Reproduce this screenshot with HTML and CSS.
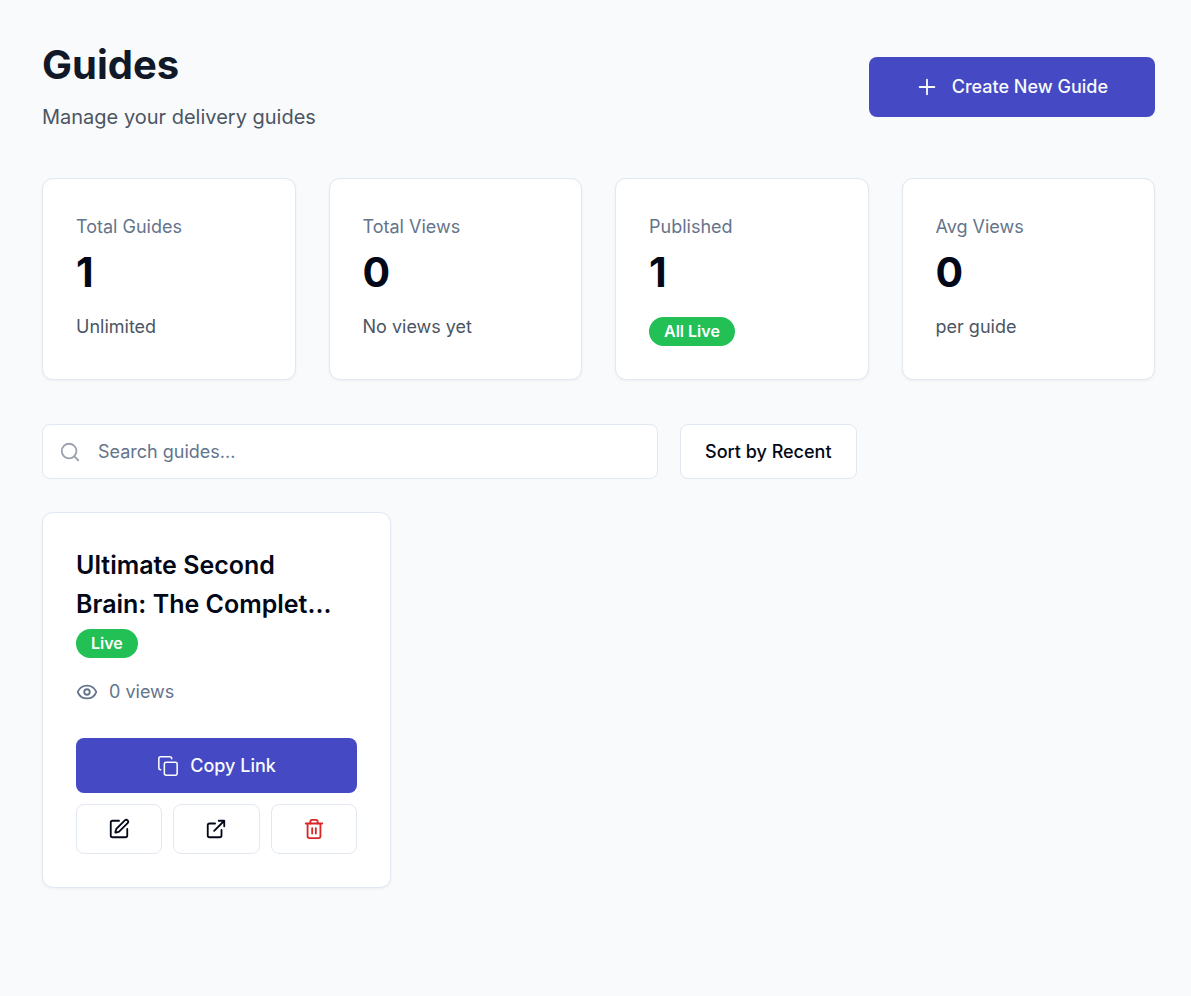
FILE: index.html
```html
<!DOCTYPE html>
<html lang="en">

<head>
    <meta charset="UTF-8">
    <meta name="viewport" content="width=device-width, initial-scale=1.0">
    <title>Guides</title>
    <link rel="stylesheet" href="styles.css">
</head>

<body>
    <main class="page">
        <!-- Page Header -->
        <header class="page-header">
            <div>
                <h1>Guides</h1>
                <p class="subtitle">Manage your delivery guides</p>
            </div>
            <button type="button" class="btn btn-primary btn-create">
                <svg class="icon" viewBox="0 0 24 24" aria-hidden="true">
                    <path d="M4 12h16M12 4v16"/>
                </svg>
                Create New Guide
            </button>
        </header>

        <!-- Stats -->
        <section class="stats">
            <div class="card">
                <h2 class="stat-label">Total Guides</h2>
                <p class="stat-value">1</p>
                <p class="stat-note">Unlimited</p>
            </div>
            <div class="card">
                <h2 class="stat-label">Total Views</h2>
                <p class="stat-value">0</p>
                <p class="stat-note">No views yet</p>
            </div>
            <div class="card">
                <h2 class="stat-label">Published</h2>
                <p class="stat-value">1</p>
                <span class="badge stat-badge">All Live</span>
            </div>
            <div class="card">
                <h2 class="stat-label">Avg Views</h2>
                <p class="stat-value">0</p>
                <p class="stat-note">per guide</p>
            </div>
        </section>

        <!-- Search and Sort -->
        <div class="toolbar">
            <label class="search">
                <svg class="icon search-icon" viewBox="0 0 24 24" aria-hidden="true">
                    <circle cx="11" cy="11" r="8"/>
                    <path d="m21 21-4.3-4.3"/>
                </svg>
                <input type="search" placeholder="Search guides..." aria-label="Search guides">
            </label>
            <button type="button" class="btn btn-outline btn-sort">Sort by Recent</button>
        </div>

        <!-- Guide List -->
        <section class="guides">
            <article class="card">
                <h3 class="guide-title">Ultimate Second Brain: The Complet...</h3>
                <span class="badge">Live</span>
                <p class="guide-views">
                    <svg class="icon" viewBox="0 0 24 24" aria-hidden="true">
                        <path d="M2.062 12.348a1 1 0 0 1 0-.696 10.75 10.75 0 0 1 19.876 0 1 1 0 0 1 0 .696 10.75 10.75 0 0 1-19.876 0"/>
                        <circle cx="12" cy="12" r="3"/>
                    </svg>
                    0 views
                </p>
                <button type="button" class="btn btn-primary btn-copy">
                    <svg class="icon" viewBox="0 0 24 24" aria-hidden="true">
                        <rect width="14" height="14" x="8" y="8" rx="2" ry="2"/>
                        <path d="M4 16c-1.1 0-2-.9-2-2V4c0-1.1.9-2 2-2h10c1.1 0 2 .9 2 2"/>
                    </svg>
                    Copy Link
                </button>
                <div class="guide-actions">
                    <button type="button" class="btn btn-outline" aria-label="Edit guide">
                        <svg class="icon" viewBox="0 0 24 24" aria-hidden="true">
                            <path d="M12 3H5a2 2 0 0 0-2 2v14a2 2 0 0 0 2 2h14a2 2 0 0 0 2-2v-7"/>
                            <path d="M18.375 2.625a1 1 0 0 1 3 3l-9.013 9.014a2 2 0 0 1-.853.505l-2.873.84a.5.5 0 0 1-.62-.62l.84-2.873a2 2 0 0 1 .506-.852z"/>
                        </svg>
                    </button>
                    <button type="button" class="btn btn-outline" aria-label="Open guide">
                        <svg class="icon" viewBox="0 0 24 24" aria-hidden="true">
                            <path d="M15 3h6v6M10 14 21 3"/>
                            <path d="M18 13v6a2 2 0 0 1-2 2H5a2 2 0 0 1-2-2V8a2 2 0 0 1 2-2h6"/>
                        </svg>
                    </button>
                    <button type="button" class="btn btn-outline btn-delete" aria-label="Delete guide">
                        <svg class="icon" viewBox="0 0 24 24" aria-hidden="true">
                            <path d="M3 6h18M19 6v14c0 1-1 2-2 2H7c-1 0-2-1-2-2V6"/>
                            <path d="M8 6V4c0-1 1-2 2-2h4c1 0 2 1 2 2v2"/>
                            <path d="M10 11v6M14 11v6"/>
                        </svg>
                    </button>
                </div>
            </article>
        </section>
    </main>
</body>

</html>
```
FILE: styles.css
```css
* {
    box-sizing: border-box;
}

body {
    margin: 0;
    font-family: Inter, "Liberation Sans", sans-serif;
    font-size: 18px;
    line-height: 28px;
    background-color: #f8fafc;
    color: #020817;
}

h1, h2, h3, p {
    margin: 0;
}

.page {
    padding: 40px 36px 40px 42px;
}

/* Header */
.page-header {
    display: flex;
    justify-content: space-between;
    align-items: center;
    margin-bottom: 44px;
}

h1 {
    font-size: 40px;
    line-height: 50px;
    font-weight: 700;
    color: #111827;
}

.subtitle {
    margin-top: 11px;
    font-size: 20px;
    line-height: 33px;
    color: #4b5563;
}

/* Buttons */
.btn {
    display: flex;
    align-items: center;
    justify-content: center;
    border: 1px solid transparent;
    border-radius: 8px;
    font-family: inherit;
    font-size: 18px;
    line-height: 28px;
    font-weight: 500;
    cursor: pointer;
}

.btn-primary {
    background-color: #4649c4;
    color: #f8fafc;
}

.btn-primary:hover {
    background-color: #3c3fb0;
}

.btn-outline {
    background-color: #fff;
    border-color: #e2e8f0;
    color: #020817;
}

.btn-outline:hover {
    background-color: #f1f5f9;
}

.btn-create {
    height: 60px;
    padding: 0 46px;
    gap: 14px;
}

.icon {
    width: 22px;
    height: 22px;
    flex-shrink: 0;
    fill: none;
    stroke: currentColor;
    stroke-width: 2;
    stroke-linecap: round;
    stroke-linejoin: round;
}

.btn-primary .icon {
    stroke-width: 1.7;
}

.btn-create .icon {
    stroke-width: 2;
}

/* Cards */
.card {
    padding: 33px;
    background-color: #fff;
    border: 1px solid #e2e8f0;
    border-radius: 11px;
    box-shadow: 0 1px 3px rgba(0, 0, 0, 0.05);
}

.stats {
    display: grid;
    grid-template-columns: repeat(4, 1fr);
    gap: 33px;
    margin-bottom: 44px;
}

.stat-label {
    font-size: 18px;
    line-height: 30px;
    font-weight: 400;
    color: #64748b;
}

.stat-value {
    margin: 5px 0 15px;
    font-size: 41px;
    line-height: 50px;
    font-weight: 700;
}

.stat-note {
    line-height: 30px;
    color: #4b5563;
}

.badge {
    display: block;
    width: fit-content;
    padding: 0 15px;
    border-radius: 15px;
    background-color: #22c055;
    color: #fff;
    font-size: 16px;
    line-height: 29px;
    font-weight: 600;
}

.stat-badge {
    margin-top: 20px;
}

/* Search and sort */
.toolbar {
    display: flex;
    gap: 22px;
    margin-bottom: 33px;
}

.search {
    display: flex;
    align-items: center;
    gap: 17px;
    flex: 0 1 616px;
    height: 55px;
    padding: 0 16px;
    background-color: #fff;
    border: 1px solid #e2e8f0;
    border-radius: 8px;
}

.search:focus-within {
    border-color: #4649c4;
}

.search-icon {
    color: #9ca3af;
}

.search input {
    flex: 1;
    min-width: 0;
    padding: 0;
    border: 0;
    outline: 0;
    background: none;
    font: inherit;
    color: #020817;
}

.search input::placeholder {
    color: #64748b;
}

.btn-sort {
    padding: 0 24px;
}

/* Guides */
.guides {
    display: grid;
    grid-template-columns: repeat(3, 1fr);
    gap: 33px;
}

.guide-title {
    margin-bottom: 5px;
    padding-right: 16px;
    font-size: 25px;
    line-height: 39px;
    font-weight: 600;
}

.guide-views {
    display: flex;
    align-items: center;
    gap: 11px;
    margin: 20px 0 32px;
    color: #64748b;
}

.btn-copy {
    width: 100%;
    height: 55px;
    gap: 11px;
}

.guide-actions {
    display: grid;
    grid-template-columns: repeat(3, 1fr);
    gap: 11px;
    margin-top: 11px;
}

.guide-actions .btn {
    height: 50px;
}

.btn-delete {
    color: #dc2626;
}

@media (max-width: 900px) {
    .stats,
    .guides {
        grid-template-columns: repeat(2, 1fr);
    }
}
```
